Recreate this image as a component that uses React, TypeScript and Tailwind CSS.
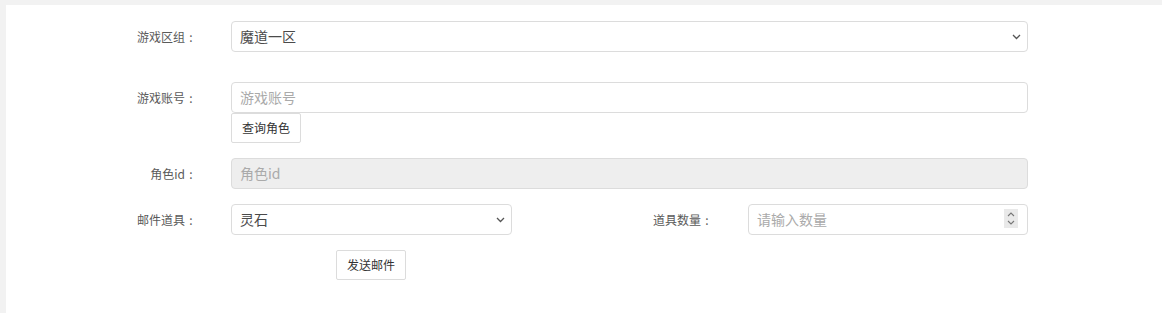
import React from "react";

const font = { fontFamily: '"Noto Sans CJK SC", "Noto Sans", sans-serif' };

function Chevron() {
  return (
    <svg width="9" height="6" viewBox="0 0 9 6" className="shrink-0">
      <path d="M1 1 L4.5 4.5 L8 1" fill="none" stroke="#555" strokeWidth="1.3" />
    </svg>
  );
}

function Label({ text, className = "" }: { text: string; className?: string }) {
  return (
    <div
      className={
        "flex justify-end items-center text-[12px] text-[#5a5a5a] leading-none whitespace-nowrap " +
        className
      }
    >
      <span>{text}</span>
      <span className="inline-block w-[12px] text-center">:</span>
    </div>
  );
}

function SelectBox({ value, className = "" }: { value: string; className?: string }) {
  return (
    <div
      className={
        "h-[31px] border border-[#dcdcdc] rounded-[4px] bg-white flex items-center justify-between pl-[8px] pr-[6px] text-[14px] text-[#4a4a4a] " +
        className
      }
    >
      <span>{value}</span>
      <Chevron />
    </div>
  );
}

export default function App() {
  return (
    <div className="w-[1162px] h-[313px] bg-[#f2f2f2] pt-[5px] pl-[6px] overflow-hidden" style={font}>
      <div className="bg-white h-full pt-[16px] pr-[134px]">
        {/* Row 1 */}
        <div className="flex items-center h-[31px]">
          <Label text="游戏区组" className="w-[191px]" />
          <SelectBox value="魔道一区" className="ml-[34px] flex-1" />
        </div>

        {/* Row 2 */}
        <div className="flex items-center h-[31px] mt-[30px]">
          <Label text="游戏账号" className="w-[191px]" />
          <input
            placeholder="游戏账号"
            className="ml-[34px] flex-1 h-[31px] border border-[#dcdcdc] rounded-[4px] px-[8px] pb-[2px] text-[14px] text-[#4a4a4a] placeholder:text-[#aaa] outline-none"
          />
        </div>
        <div className="flex">
          <div className="w-[225px]" />
          <button className="h-[30px] w-[70px] border border-[#dcdcdc] rounded-[2px] bg-white text-[12px] text-[#333] flex items-center justify-center">
            查询角色
          </button>
        </div>

        {/* Row 3 */}
        <div className="flex items-center h-[31px] mt-[15px]">
          <Label text="角色id" className="w-[191px]" />
          <input
            disabled
            placeholder="角色id"
            className="ml-[34px] flex-1 h-[31px] border border-[#dcdcdc] rounded-[4px] px-[8px] pb-[2px] text-[14px] bg-[#eeeeee] placeholder:text-[#aaa] outline-none"
          />
        </div>

        {/* Row 4 */}
        <div className="flex items-center h-[31px] mt-[15px]">
          <Label text="邮件道具" className="w-[191px]" />
          <SelectBox value="灵石" className="ml-[34px] w-[281px]" />
          <Label text="道具数量" className="w-[201px]" />
          <div className="ml-[35px] flex-1 h-[31px] relative">
            <input
              placeholder="请输入数量"
              className="w-full h-full border border-[#dcdcdc] rounded-[4px] px-[8px] pb-[2px] text-[14px] text-[#4a4a4a] placeholder:text-[#aaa] outline-none"
            />
            <div className="absolute right-[10px] top-[5px] w-[14px] h-[19px] bg-[#e9e9e9] flex flex-col items-center justify-center gap-[3px]">
              <svg width="8" height="5" viewBox="0 0 8 5">
                <path d="M1 4 L4 1 L7 4" fill="none" stroke="#777" strokeWidth="1.1" />
              </svg>
              <svg width="8" height="5" viewBox="0 0 8 5">
                <path d="M1 1 L4 4 L7 1" fill="none" stroke="#777" strokeWidth="1.1" />
              </svg>
            </div>
          </div>
        </div>

        {/* Send button */}
        <div className="flex mt-[15px]">
          <div className="w-[330px]" />
          <button className="h-[30px] w-[70px] border border-[#dcdcdc] rounded-[2px] bg-white text-[12px] text-[#333] flex items-center justify-center">
            发送邮件
          </button>
        </div>
      </div>
    </div>
  );
}
